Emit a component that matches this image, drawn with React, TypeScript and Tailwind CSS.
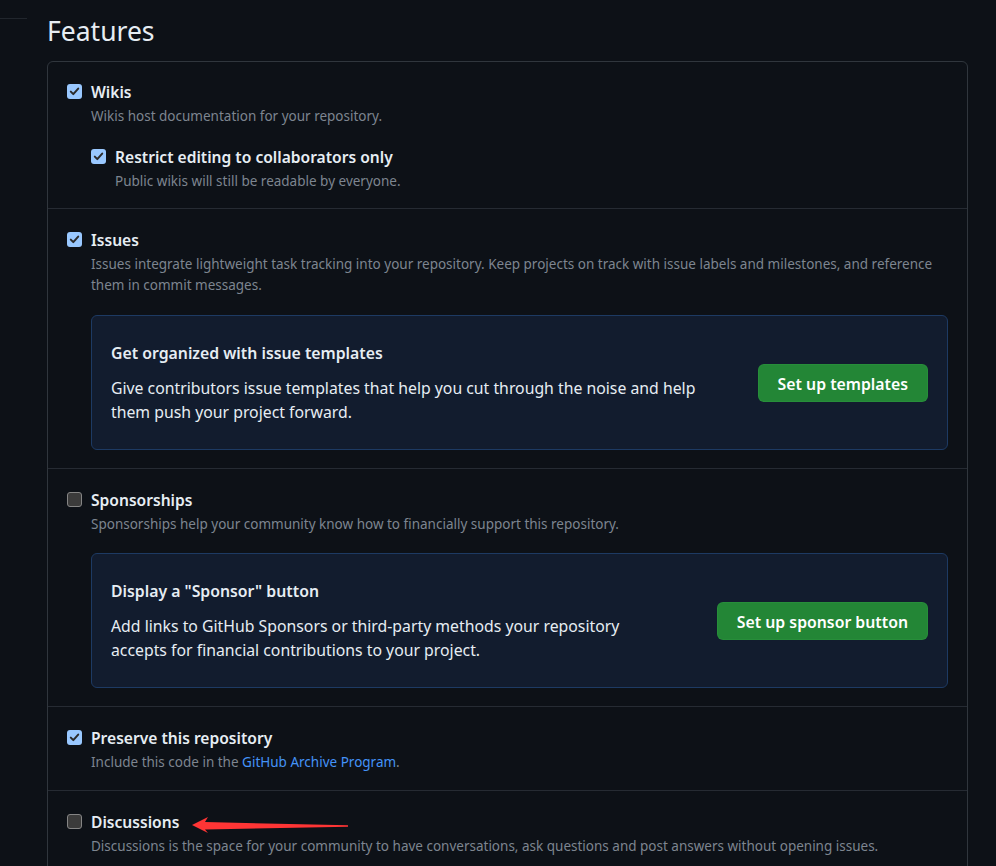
import React from "react";

const font = { fontFamily: '"Noto Sans", "Open Sans", sans-serif' };

function Check({ checked }: { checked: boolean }) {
  return checked ? (
    <span className="mt-[2px] flex h-[15px] w-[15px] shrink-0 items-center justify-center rounded-[3px] bg-[#99c8ff]">
      <svg width="11" height="11" viewBox="0 0 11 11">
        <path d="M1.8 5.6 L4.3 8.1 L9.2 2.6" stroke="#2b2b2b" strokeWidth="2" fill="none" strokeLinecap="round" strokeLinejoin="round" />
      </svg>
    </span>
  ) : (
    <span className="mt-[2px] h-[15px] w-[15px] shrink-0 rounded-[3px] border border-[#858585] bg-[#3b3b3b]" />
  );
}

function Row({ checked, label, children }: { checked: boolean; label: string; children?: React.ReactNode }) {
  return (
    <div className="flex gap-[9px]">
      <Check checked={checked} />
      <div className="min-w-0 flex-1">
        <div className="text-[15.6px] font-semibold leading-[20px] text-[#e6edf3]">{label}</div>
        {children}
      </div>
    </div>
  );
}

function Desc({ children }: { children: React.ReactNode }) {
  return <div className="mt-[4px] text-[13.5px] leading-[21px] text-[#7d8590]">{children}</div>;
}

function Callout({ title, body, button }: { title: string; body: React.ReactNode; button: string }) {
  return (
    <div className="mt-[19px] flex h-[135px] items-center gap-[48px] rounded-md border border-[#1d3a63] bg-[#121c2e] px-[19px]">
      <div className="min-w-0 flex-1">
        <div className="text-[15.8px] font-semibold leading-[24px] text-[#e6edf3]">{title}</div>
        <div className="mt-[11px] text-[15.8px] leading-[24px] text-[#e6edf3]">{body}</div>
      </div>
      <button className="h-[38px] shrink-0 rounded-md border border-[#2e9a40]/40 bg-[#238636] px-[19px] pt-[3px] text-[15.8px] font-semibold leading-[20px] text-white">
        {button}
      </button>
    </div>
  );
}

export default function App() {
  return (
    <div className="relative flex h-[866px] w-full overflow-hidden bg-[#0d1117]" style={font}>
      <div className="mt-[18px] h-0 w-[27px] shrink-0 border-t border-[#21262d]" />
      <div className="ml-[20px] mr-[28px] flex-1">
        <h2 className="pt-[12px] text-[26.5px] font-normal leading-[38px] text-[#e6edf3]">Features</h2>
        <div className="mt-[11px] rounded-md border border-[#30363d]">
          <div className="border-b border-[#262b33] pb-[16px] pl-[19px] pr-[19px] pt-[20px]">
            <Row checked label="Wikis">
              <Desc>Wikis host documentation for your repository.</Desc>
              <div className="mt-[20px]">
                <Row checked label="Restrict editing to collaborators only">
                  <Desc>Public wikis will still be readable by everyone.</Desc>
                </Row>
              </div>
            </Row>
          </div>
          <div className="border-b border-[#262b33] pb-[18px] pl-[19px] pr-[19px] pt-[21px]">
            <Row checked label="Issues">
              <Desc>
                Issues integrate lightweight task tracking into your repository. Keep projects on track with issue labels and
                milestones, and reference them in commit messages.
              </Desc>
              <Callout
                title="Get organized with issue templates"
                body="Give contributors issue templates that help you cut through the noise and help them push your project forward."
                button="Set up templates"
              />
            </Row>
          </div>
          <div className="border-b border-[#262b33] pb-[18px] pl-[19px] pr-[19px] pt-[21px]">
            <Row checked={false} label="Sponsorships">
              <Desc>Sponsorships help your community know how to financially support this repository.</Desc>
              <div className="-mt-px">
                <Callout
                  title={'Display a "Sponsor" button'}
                  body="Add links to GitHub Sponsors or third-party methods your repository accepts for financial contributions to your project."
                  button="Set up sponsor button"
                />
              </div>
            </Row>
          </div>
          <div className="border-b border-[#262b33] pb-[17px] pl-[19px] pr-[19px] pt-[21px]">
            <Row checked label="Preserve this repository">
              <Desc>
                Include this code in the <span className="text-[#4493f8]">GitHub Archive Program</span>.
              </Desc>
            </Row>
          </div>
          <div className="pb-[16px] pl-[19px] pr-[19px] pt-[21px]">
            <Row checked={false} label="Discussions">
              <Desc>
                Discussions is the space for your community to have conversations, ask questions and post answers without opening
                issues.
              </Desc>
            </Row>
          </div>
        </div>
      </div>
      <svg className="pointer-events-none absolute left-0 top-0" width="996" height="866">
        <polygon
          points="192,825 208,817 205,822 348,825.3 348,826.8 205,829.5 208,833"
          fill="#ff3535"
        />
      </svg>
    </div>
  );
}
